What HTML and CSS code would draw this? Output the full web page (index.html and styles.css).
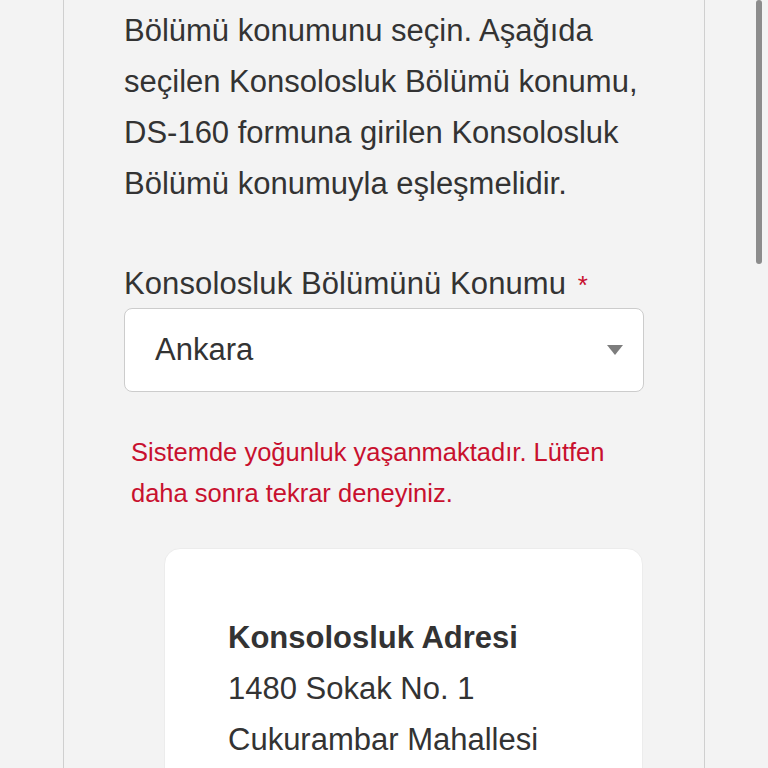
FILE: index.html
```html
<!DOCTYPE html>
<html lang="tr">
<head>
<meta charset="utf-8">
<title>Konsolosluk Bölümü</title>
<link rel="stylesheet" href="styles.css">
</head>
<body>
<div class="page">
  <main class="panel">
    <p class="intro">Bölümü konumunu seçin. Aşağıda seçilen Konsolosluk Bölümü konumu, DS-160 formuna girilen Konsolosluk Bölümü konumuyla eşleşmelidir.</p>
    <div class="field">
      <label class="label">Konsolosluk Bölümünü Konumu <span class="req">*</span></label>
      <div class="select">
        <span class="select-value">Ankara</span>
        <svg class="select-arrow" width="16" height="10" viewBox="0 0 16 10"><path d="M0 0 H16 L8 10 Z" fill="#7d7d7d"/></svg>
      </div>
    </div>
    <p class="error">Sistemde yoğunluk yaşanmaktadır. Lütfen daha sonra tekrar deneyiniz.</p>
    <section class="card">
      <h3 class="card-title">Konsolosluk Adresi</h3>
      <p class="card-line">1480 Sokak No. 1</p>
      <p class="card-line">Cukurambar Mahallesi</p>
    </section>
  </main>
  <div class="scroll-thumb"></div>
</div>
</body>
</html>
```

FILE: styles.css
```css
html, body {
  margin: 0;
  padding: 0;
  height: 768px;
  overflow: hidden;
  background: #f3f3f3;
}
body {
  font-family: "Liberation Sans", Arial, Helvetica, sans-serif;
  color: #333333;
}
.page {
  position: relative;
  height: 768px;
}
.panel {
  margin-left: 63px;
  width: 642px;
  min-height: 768px;
  border-left: 1.5px solid #cfcfcf;
  border-right: 1.5px solid #cfcfcf;
  padding: 5px 0 0 60px;
  box-sizing: border-box;
}
.intro {
  margin: 0 0 50px 0;
  font-size: 31px;
  line-height: 51px;
  width: 540px;
}
.field {
  display: flex;
  flex-direction: column;
}
.label {
  font-size: 31px;
  line-height: 49px;
  height: 49px;
  letter-spacing: 0.1px;
}
.req {
  color: #c8102e;
  font-size: 26px;
  margin-left: 3px;
}
.select {
  display: flex;
  align-items: center;
  justify-content: space-between;
  width: 520px;
  height: 84px;
  box-sizing: border-box;
  background: #ffffff;
  border: 1.5px solid #cccccc;
  border-radius: 8px;
  padding: 0 20px 0 30px;
}
.select-value {
  font-size: 31px;
  color: #333333;
}
.error {
  margin: 40px 0 0 7px;
  font-size: 25.5px;
  line-height: 41px;
  color: #c8102e;
  width: 500px;
}
.card {
  margin: 34px 0 0 40px;
  width: 479px;
  background: #ffffff;
  border: 1px solid #ececec;
  border-radius: 16px;
  padding: 63px 0 40px 63px;
  box-sizing: border-box;
}
.card-title {
  margin: 0;
  font-size: 31px;
  line-height: 51px;
  font-weight: bold;
}
.card-line {
  margin: 0;
  font-size: 31px;
  line-height: 51px;
}
.scroll-thumb {
  position: absolute;
  top: 0;
  left: 756px;
  width: 6px;
  height: 264px;
  border-radius: 3px;
  background: #8c8c8c;
}
```
